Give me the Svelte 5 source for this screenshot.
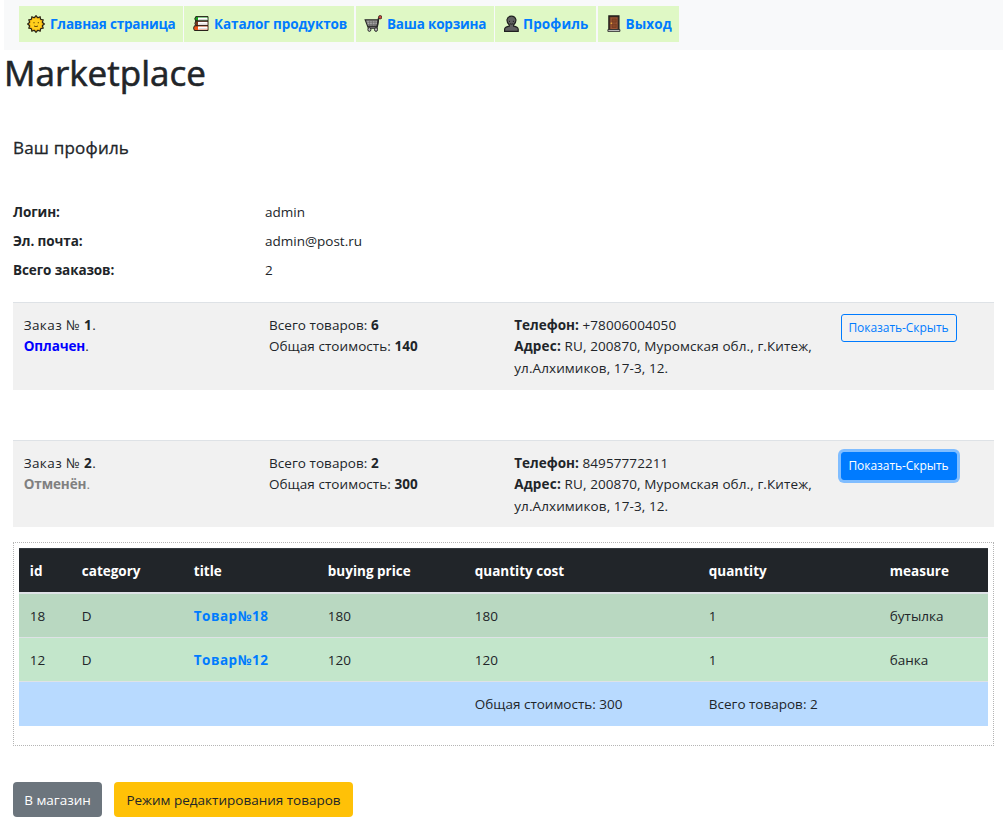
<script>
  const nav = [
    { icon: 'sun', label: 'Главная страница', width: 164, gap: 1 },
    { icon: 'books', label: 'Каталог продуктов', width: 170, gap: 2 },
    { icon: 'cart', label: 'Ваша корзина', width: 138, gap: 1 },
    { icon: 'person', label: 'Профиль', width: 101, gap: 2 },
    { icon: 'door', label: 'Выход', width: 81, gap: 0 }
  ];
  const facts = [
    ['Логин:', 'admin'],
    ['Эл. почта:', 'admin@post.ru'],
    ['Всего заказов:', '2']
  ];
  const orders = [
    { no: 1, status: 'Оплачен', paid: true, count: 6, cost: 140, phone: '+78006004050', open: false },
    { no: 2, status: 'Отменён', paid: false, count: 2, cost: 300, phone: '84957772211', open: true }
  ];
  const heads = ['id', 'category', 'title', 'buying price', 'quantity cost', 'quantity', 'measure'];
  const goods = [
    ['18', 'D', 'Товар№18', '180', '180', '1', 'бутылка'],
    ['12', 'D', 'Товар№12', '120', '120', '1', 'банка']
  ];
</script>

{#snippet glyph(name)}
  <svg class="icon" viewBox="0 0 18 18" width="18" height="18" aria-hidden="true">
    {#if name === 'sun'}
      <path d="M9 .7 10.7 2.7 13.1 1.8 13.7 4.3 16.2 4.9 15.3 7.3 17.3 9 15.3 10.7 16.2 13.1 13.7 13.7 13.1 16.2 10.7 15.3 9 17.3 7.3 15.3 4.9 16.2 4.3 13.7 1.8 13.1 2.7 10.7.7 9 2.7 7.3 1.8 4.9 4.3 4.3 4.9 1.8 7.3 2.7Z" fill="#f0b010" stroke="#2a2314" stroke-width="1.2" />
      <circle cx="9" cy="9" r="5.8" fill="#ffcf1c" />
      <path d="M7 7v1.3M11.3 7v1.3M7 11q2 1.2 4 0" fill="none" stroke="#6b4a08" stroke-width="1" />
    {:else if name === 'books'}
      <path d="M3.8 1.6H16V6H3.8Q1.8 3.8 3.8 1.6Z" fill="#16a01c" stroke="#29211b" />
      <path d="M6 2.5h9.5v2.9H6Z" fill="#fff" />
      <path d="M3.8 6H16v4.7H3.8Q2 8.4 3.8 6Z" fill="#73391d" stroke="#29211b" />
      <path d="M6 6.9h9.5v3H6Z" fill="#fff" />
      <path d="M2.4 10.8H16v4.7H2.4Q.8 13.2 2.4 10.8Z" fill="#ef5615" stroke="#29211b" />
      <path d="M6 11.5h9.5v3.1H6Z" fill="#fff" />
      <path d="M6.5 13.8h8.5M6.5 9h8.5M6.5 4.5h8.5" stroke="#bbb" stroke-width=".6" />
    {:else if name === 'cart'}
      <path d="M1.2 4.8H14.4L13 13.2H4.4Z" fill="#a8a8a8" stroke="#292929" stroke-width="1.2" />
      <path d="M2.6 7.2H13.4M3.4 9.6H13M5.6 5.3v5.5M8.3 5.3v5.5M11 5.3v5.5" stroke="#666" stroke-width=".7" />
      <path d="M4 11.3H13.3" stroke="#292929" stroke-width="1.2" />
      <path d="M16.2 2 14.6 3.4 13.2 11.5" fill="none" stroke="#292929" stroke-width="1.5" />
      <circle cx="16.2" cy="2.2" r="1.7" fill="#d04a40" stroke="#3a2020" stroke-width=".8" />
      <ellipse cx="5.4" cy="14.5" rx="1.5" ry="1.9" fill="#bbb" stroke="#292929" />
      <ellipse cx="12" cy="14.5" rx="1.5" ry="1.9" fill="#bbb" stroke="#292929" />
    {:else if name === 'person'}
      <path d="M1.6 16.3V14Q2 12 6.3 11.2V10Q3.7 7.7 4 4.7 4.8 1.2 8.4 1.2t4.5 3.5Q13.2 7.7 10.6 10v1.2q4.2.8 4.6 2.8v2.3Z" fill="#606060" stroke="#202020" stroke-width="1.2" />
      <path d="M6.5 5.8v1.2M10.4 5.8v1.2M6.8 8.7q1.7 1 3.4 0" fill="none" stroke="#222" />
    {:else}
      <path d="M2.9 1h10v14h-10Z" fill="#613b2b" stroke="#211d1b" stroke-width="1.3" />
      <path d="M4.4 2.4h7V14h-7Z" fill="#9c5434" />
      <path d="M6.2 3.9h4v3.3h-4ZM6.2 9h4v3.5h-4Z" fill="#894627" stroke="#6b351e" stroke-width=".6" />
      <circle cx="5.3" cy="8.2" r=".8" fill="#f4b63c" />
      <path d="M1.9 14.6h12v1.8h-12Z" fill="#ddd" stroke="#292929" stroke-width=".9" />
    {/if}
  </svg>
{/snippet}

<nav>
  {#each nav as item}
    <a class="link {item.icon}" href="#{item.icon}" style="width:{item.width}px;margin-right:{item.gap}px">
      {@render glyph(item.icon)}<span>{item.label}</span>
    </a>
  {/each}
</nav>
<h1>Marketplace</h1>
<main>
  <h2>Ваш профиль</h2>
  <dl>
    {#each facts as [term, value]}
      <dt>{term}</dt>
      <dd>{value}</dd>
    {/each}
  </dl>
  {#each orders as order}
    <section class="order">
      <div>Заказ № <b>{order.no}</b>.<br /><b class={order.paid ? 'paid' : 'cancelled'}>{order.status}</b><span class={order.paid ? '' : 'cancelled'}>.</span></div>
      <div>Всего товаров: <b>{order.count}</b><br />Общая стоимость: <b>{order.cost}</b></div>
      <div class="address"><b>Телефон:</b> {order.phone}<br /><b class="place">Адрес:</b> <span>RU, 200870, Муромская обл., г.Китеж,</span><br />ул.Алхимиков, 17-3, 12.</div>
      <div class="action"><button class="toggle" class:open={order.open}>Показать-Скрыть</button></div>
    </section>
  {/each}
  <div class="details">
    <table>
      <colgroup><col class="c1" /><col class="c2" /><col class="c3" /><col class="c4" /><col class="c5" /><col class="c6" /><col /></colgroup>
      <thead><tr>{#each heads as head}<th>{head}</th>{/each}</tr></thead>
      <tbody>
        {#each goods as row, r}
          <tr class:odd={r === 0}>
            {#each row as cell, i}<td>{#if i === 2}<a href="#item">{cell}</a>{:else}{cell}{/if}</td>{/each}
          </tr>
        {/each}
        <tr class="total"><td></td><td></td><td></td><td></td><td>Общая стоимость: 300</td><td>Всего товаров: 2</td><td></td></tr>
      </tbody>
    </table>
  </div>
  <footer>
    <button class="btn shop">В магазин</button>
    <button class="btn edit">Режим редактирования товаров</button>
  </footer>
</main>

<style>
  :global(body) {
    margin: 0;
    background: #fff;
    color: #212529;
    font: 400 13.5px/21.6px 'Open Sans', 'Noto Sans', sans-serif;
    overflow: hidden;
  }
  b, th, dt, a { font-weight: 700; }
  dt { letter-spacing: -0.1px; }
  a { color: #007bff; text-decoration: none; }
  nav {
    display: flex;
    box-sizing: border-box;
    height: 50px;
    margin: 0 3px 0 4px;
    padding: 6px 0 8px 15px;
    background: #f8f9fa;
  }
  .link {
    display: flex;
    align-items: center;
    box-sizing: border-box;
    flex: none;
    height: 36px;
    padding-left: 8px;
    background: #dff8c5;
    white-space: nowrap;
    letter-spacing: -0.2px;
  }
  .link span { padding-top: 2px; }
  .icon { flex: none; margin-right: 5px; }
  .books { letter-spacing: -0.1px; }
  .books .icon { margin-right: 4px; }
  .person, .door { letter-spacing: 0.12px; }
  .person .icon { margin-right: 2px; }
  .door .icon { margin-right: 1.5px; }
  h1 {
    margin: 1px 0 0 4px;
    font-size: 35px;
    font-weight: 500;
    line-height: 43px;
    -webkit-text-stroke: 0.6px #212529;
  }
  main { margin: 43px 12px 0 13px; }
  h2 { margin: 0; font-size: 17px; font-weight: 500; line-height: 21px; letter-spacing: 0.2px; -webkit-text-stroke: 0.3px #212529; }
  dl {
    display: grid;
    grid-template-columns: 252px 1fr;
    grid-auto-rows: 29px;
    align-items: center;
    margin: 40px 0 17px;
  }
  dd { margin: 0; }
  .order {
    display: grid;
    grid-template-columns: 3fr 3fr 4fr 2fr;
    box-sizing: border-box;
    height: 88px;
    margin-bottom: 50px;
    border-top: 1px solid #dee2e6;
    background: #f1f1f1;
    white-space: nowrap;
  }
  .order + .order { height: 87px; margin-bottom: 15px; }
  .order > div { padding: 11.6px 10.7px 0; }
  .order > div:first-child { letter-spacing: 0.4px; }
  .order > div:first-child .paid, .order > div:first-child .cancelled { letter-spacing: -0.1px; }
  .order > div:nth-child(2) { letter-spacing: 0.06px; }
  .address { letter-spacing: 0.1px; }
  .address b { letter-spacing: 0; }
  .address .place { letter-spacing: 0.2px; }
  .order > .action { padding: 11px 0 0 10px; }
  .paid { color: #00f; }
  .cancelled { color: #808080; }
  .toggle {
    display: block;
    box-sizing: border-box;
    width: 116px;
    height: 28px;
    padding: 0;
    border: 1px solid #007bff;
    border-radius: 3px;
    background: transparent;
    color: #007bff;
    font: 12px/18px 'Open Sans', sans-serif;
    letter-spacing: -0.05px;
  }
  .toggle.open { background: #007bff; color: #fff; box-shadow: 0 0 0 3px #80bdff; }
  .details {
    box-sizing: border-box;
    height: 204px;
    padding: 5px;
    border: 1px dotted #b5b5b5;
  }
  table { width: 969px; table-layout: fixed; border-collapse: separate; border-spacing: 0; }
  .c1 { width: 52px; }
  .c2 { width: 112px; }
  .c3 { width: 134px; }
  .c4 { width: 147px; }
  .c5 { width: 234px; }
  .c6 { width: 181px; }
  th, td { box-sizing: border-box; height: 44px; padding: 2px 10.8px 0; text-align: left; white-space: nowrap; }
  th { height: 46px; background: #212529; color: #fff; border-top: 1px solid #32383e; border-bottom: 2px solid #dee2e6; }
  td { background: #c3e6cb; border-bottom: 1px solid #dee2e6; }
  td a { letter-spacing: 0.5px; }
  .odd td { background: #b9d8c1; }
  .total td { background: #b8daff; border: 0; }
  footer { display: flex; gap: 12px; margin-top: 36px; }
  .btn {
    box-sizing: border-box;
    height: 35px;
    padding: 2px 0 0;
    border: 0;
    border-radius: 4px;
    font: 13.5px/21.6px 'Open Sans', sans-serif;
  }
  .shop { width: 89px; background: #6c757d; color: #fff; }
  .edit { width: 239px; background: #ffc107; color: #212529; }
</style>
